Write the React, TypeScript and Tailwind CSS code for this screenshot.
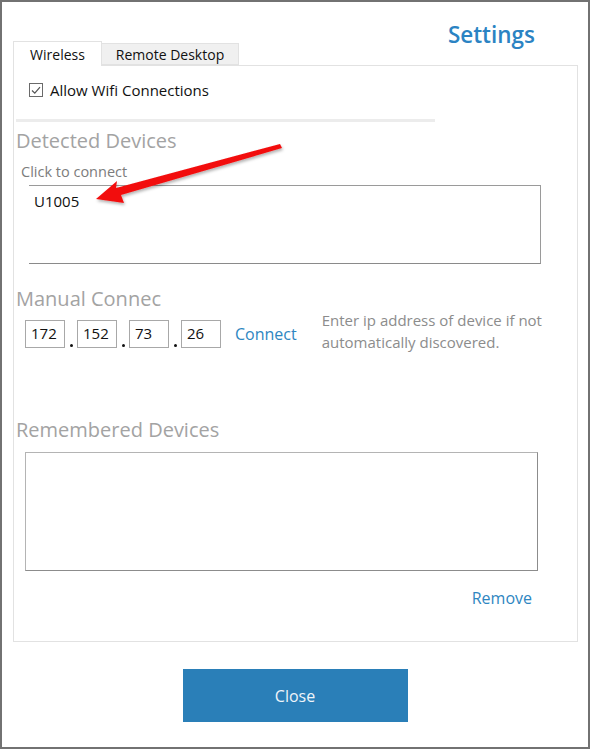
import React from 'react'

const font = { fontFamily: '"Open Sans", "Noto Sans", sans-serif' }

function IpBox({ value }: { value: string }) {
  return (
    <div className="w-[40px] h-[28px] border border-[#a8a8a8] bg-white pl-[5px] flex items-center text-[15px] text-[#111]">
      {value}
    </div>
  )
}

function Dot() {
  return (
    <div className="w-[12px] h-[28px] flex items-end justify-center pb-[1px]">
      <div className="w-[3px] h-[3px] rounded-full bg-[#111]" />
    </div>
  )
}

export default function App() {
  return (
    <div className="w-[593px] h-[750px] bg-white relative" style={font}>
      <div className="w-[590px] h-[749px] border-2 border-[#727272] pl-[11px] pr-[10px]">
        {/* Header: tabs + title */}
        <div className="flex items-end justify-between">
          <div className="flex items-end mt-[38px]">
            <div className="w-[89px] h-[25px] border border-b-0 border-[#e2e2e2] bg-white flex items-center justify-center text-[14px] text-[#111] relative top-[1px]">
              Wireless
            </div>
            <div className="w-[137px] h-[22px] border border-l-0 border-[#e2e2e2] bg-[#f0f0f0] flex items-center justify-center text-[14px] text-[#111]">
              Remote Desktop
            </div>
          </div>
          <div className="text-[22.5px] font-semibold text-[#2b83c3] pr-[43px] pb-[19px] leading-none">
            Settings
          </div>
        </div>

        {/* Panel */}
        <div className="w-[565px] h-[577px] border border-[#e2e2e2] flex flex-col">
          <div className="flex items-center gap-[7px] pl-[15px] mt-[13px]">
            <div className="w-[14px] h-[14px] border border-[#6a6a6a] flex items-center justify-center">
              <svg width="10" height="9" viewBox="0 0 10 9">
                <path d="M1 4.5 L3.8 7.2 L9 1.2" fill="none" stroke="#555" strokeWidth="1.2" />
              </svg>
            </div>
            <span className="text-[15px] text-[#111]">Allow Wifi Connections</span>
          </div>

          <div className="ml-[2px] mt-[17px] w-[419px] h-[3px] bg-[#ececec]" />

          <div className="ml-[2px] mt-[6px] text-[20px] text-[#a3a3a3] leading-[26px]">Detected Devices</div>
          <div className="ml-[7px] mt-[10px] text-[14.5px] text-[#7c7c7c] leading-[16px]">Click to connect</div>
          <div className="ml-[15px] mt-[5px] w-[512px] h-[79px] border-t border-b border-r border-t-[#9a9a9a] border-b-[#8a8a8a] border-r-[#9a9a9a] pl-[5px] pt-[6px]">
            <div className="text-[15px] text-[#111] leading-[18px]">U1005</div>
          </div>

          <div className="ml-[2px] mt-[22px] text-[20px] text-[#a3a3a3] leading-[26px]">Manual Connec</div>
          <div className="flex items-start mt-[-3px] ml-[11px]">
            <div className="flex items-center mt-[11px]">
              <IpBox value="172" />
              <Dot />
              <IpBox value="152" />
              <Dot />
              <IpBox value="73" />
              <Dot />
              <IpBox value="26" />
              <span className="ml-[14px] text-[16px] text-[#2e86c1]">Connect</span>
            </div>
            <div className="ml-[25px] text-[15px] text-[#8c8c8c] leading-[22px] w-[240px]">
              Enter ip address of device if not automatically discovered.
            </div>
          </div>

          <div className="ml-[2px] mt-[64px] text-[20px] text-[#a3a3a3] leading-[26px]">Remembered Devices</div>
          <div className="ml-[11px] mt-[9px] w-[513px] h-[119px] border border-[#b4b4b4] border-b-[#8c8c8c] border-r-[#8c8c8c]" />
          <div className="flex justify-end pr-[45px] mt-[15px]">
            <span className="text-[16px] text-[#2e86c1]">Remove</span>
          </div>
        </div>

        <div className="flex justify-center mt-[27px] pr-[1px]">
          <div className="w-[225px] h-[53px] bg-[#2a7fb8] flex items-center justify-center text-[16px] text-[#eef4fa]">
            Close
          </div>
        </div>
      </div>

      {/* Red annotation arrow */}
      <svg className="absolute left-0 top-0 pointer-events-none" width="593" height="750">
        <defs>
          <filter id="sh" x="-10%" y="-50%" width="120%" height="200%">
            <feDropShadow dx="1" dy="2" stdDeviation="1.5" floodColor="#000" floodOpacity="0.3" />
          </filter>
        </defs>
        <polygon
          points="96,199 117,181 116,188 280,144 282,148 121,195 124,203"
          fill="#f20f0f"
          filter="url(#sh)"
        />
      </svg>
    </div>
  )
}
